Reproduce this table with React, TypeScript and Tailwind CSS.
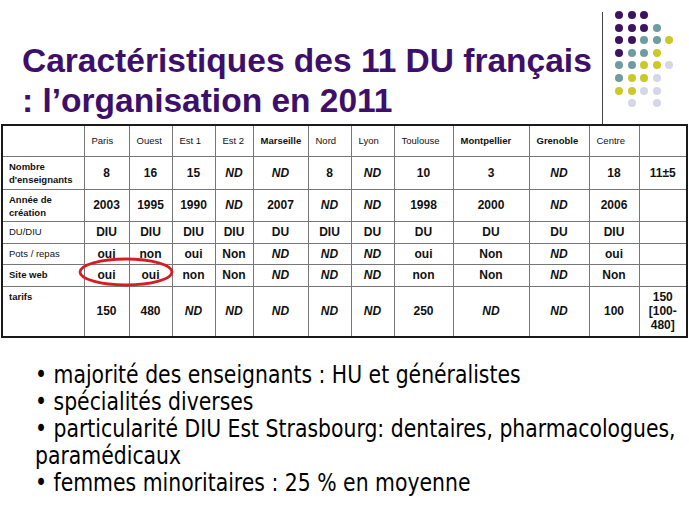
import React from 'react'

// couleurs des pastilles du coin
const P = 'bg-[#3c1361]'
const T = 'bg-[#6f9c9e]'
const Y = 'bg-[#c9c92a]'
const L = 'bg-[#d5d6e8]'

const dots: (string | null)[][] = [
  [P, P, P, null, null],
  [P, P, P, T, null],
  [P, P, T, T, Y],
  [P, T, T, Y, null],
  [T, T, Y, Y, L],
  [T, Y, Y, L, null],
  [Y, Y, L, L, null],
  [null, L, null, L, null],
]

const cities = [
  { name: 'Paris', w: 'w-[45px]', bold: false },
  { name: 'Ouest', w: 'w-[43px]', bold: false },
  { name: 'Est 1', w: 'w-[43px]', bold: false },
  { name: 'Est 2', w: 'w-[38px]', bold: false },
  { name: 'Marseille', w: 'w-[55px]', bold: true },
  { name: 'Nord', w: 'w-[43px]', bold: false },
  { name: 'Lyon', w: 'w-[43px]', bold: false },
  { name: 'Toulouse', w: 'w-[59px]', bold: false },
  { name: 'Montpellier', w: 'w-[76px]', bold: true },
  { name: 'Grenoble', w: 'w-[60px]', bold: true },
  { name: 'Centre', w: 'w-[50px]', bold: false },
]

type Row = { label: string[]; bold: boolean; h: string; values: string[]; last: string[] }

const rows: Row[] = [
  {
    label: ['Nombre', "d'enseignants"],
    bold: true,
    h: 'h-[33px]',
    values: ['8', '16', '15', 'ND', 'ND', '8', 'ND', '10', '3', 'ND', '18'],
    last: ['11±5'],
  },
  {
    label: ['Année de', 'création'],
    bold: true,
    h: 'h-[32px]',
    values: ['2003', '1995', '1990', 'ND', '2007', 'ND', 'ND', '1998', '2000', 'ND', '2006'],
    last: [],
  },
  {
    label: ['DU/DIU'],
    bold: false,
    h: 'h-[22px]',
    values: ['DIU', 'DIU', 'DIU', 'DIU', 'DU', 'DIU', 'DU', 'DU', 'DU', 'DU', 'DIU'],
    last: [],
  },
  {
    label: ['Pots / repas'],
    bold: false,
    h: 'h-[21px]',
    values: ['oui', 'non', 'oui', 'Non', 'ND', 'ND', 'ND', 'oui', 'Non', 'ND', 'oui'],
    last: [],
  },
  {
    label: ['Site web'],
    bold: true,
    h: 'h-[22px]',
    values: ['oui', 'oui', 'non', 'Non', 'ND', 'ND', 'ND', 'non', 'Non', 'ND', 'Non'],
    last: [],
  },
  {
    label: ['tarifs'],
    bold: true,
    h: 'h-[51px]',
    values: ['150', '480', 'ND', 'ND', 'ND', 'ND', 'ND', '250', 'ND', 'ND', '100'],
    last: ['150', '[100-', '480]'],
  },
]

function Value({ v }: { v: string }) {
  return <span className={v === 'ND' ? 'italic' : ''}>{v}</span>
}

export default function App() {
  return (
    <div className="relative w-[689px] h-[517px] overflow-hidden bg-white font-['Liberation_Sans',Arial,sans-serif]">
      {/* titre + logo */}
      <div className="flex h-[124px]">
        <div className="w-[580px] pl-[22px] pt-[41px] text-[33.5px] leading-[40px] font-bold text-[#3d0f6b] whitespace-nowrap">
          <div>Caractéristiques des 11 DU français</div>
          <div>: l’organisation en 2011</div>
        </div>
        <div className="ml-[22px] mt-[12px] w-px bg-[#444]" />
        <div className="ml-[12px] mt-[11px] grid grid-cols-[repeat(5,8px)] gap-x-[4.5px] gap-y-[4.6px] content-start">
          {dots.flat().map((c, i) => (
            <div key={i} className={`w-[8px] h-[8px] rounded-full ${c ?? ''}`} />
          ))}
        </div>
      </div>

      {/* tableau */}
      <div className="relative ml-[1px] w-[685px]">
        <table className="w-[685px] table-fixed border-collapse border-2 border-[#1a1a1a] text-[#111]">
          <thead>
            <tr className="h-[31px]">
              <th className="w-[82px] border border-[#777]" />
              {cities.map((c) => (
                <th
                  key={c.name}
                  className={`${c.w} border border-[#777] pl-[7px] text-left text-[9.5px] ${c.bold ? 'font-bold' : 'font-normal'}`}
                >
                  {c.name}
                </th>
              ))}
              <th className="w-[48px] border border-[#777]" />
            </tr>
          </thead>
          <tbody>
            {rows.map((r) => (
              <tr key={r.label[0]} className={r.h}>
                <td
                  className={`border border-[#777] align-top pl-[6px] pt-[3px] text-[9.5px] leading-[13px] ${r.bold ? 'font-bold' : 'font-normal'}`}
                >
                  {r.label.map((l) => (
                    <div key={l}>{l}</div>
                  ))}
                </td>
                {r.values.map((v, i) => (
                  <td key={i} className="border border-[#777] text-center text-[12px] font-bold">
                    <Value v={v} />
                  </td>
                ))}
                <td className="border border-[#777] text-center text-[12px] font-bold leading-[14px]">
                  {r.last.map((l) => (
                    <div key={l}>{l}</div>
                  ))}
                </td>
              </tr>
            ))}
          </tbody>
        </table>

        {/* cercle rouge autour de "oui oui" */}
        <svg className="absolute left-[76px] top-[132px] w-[98px] h-[32px] pointer-events-none" viewBox="0 0 98 32">
          <ellipse cx="49" cy="16" rx="46" ry="13" fill="none" stroke="#d51e24" strokeWidth="2.8" />
        </svg>
      </div>

      {/* puces */}
      <div className="mt-[24px] pl-[35px] font-['DejaVu_Sans',Tahoma,sans-serif] text-[24px] leading-[27px] text-black whitespace-nowrap">
        <div className="origin-left scale-x-[0.85]">• majorité des enseignants : HU et généralistes</div>
        <div className="origin-left scale-x-[0.85]">• spécialités diverses</div>
        <div className="origin-left scale-x-[0.85]">• particularité DIU Est Strasbourg: dentaires, pharmacologues,</div>
        <div className="origin-left scale-x-[0.85]">paramédicaux</div>
        <div className="origin-left scale-x-[0.85]">• femmes minoritaires : 25 % en moyenne</div>
      </div>
    </div>
  )
}
